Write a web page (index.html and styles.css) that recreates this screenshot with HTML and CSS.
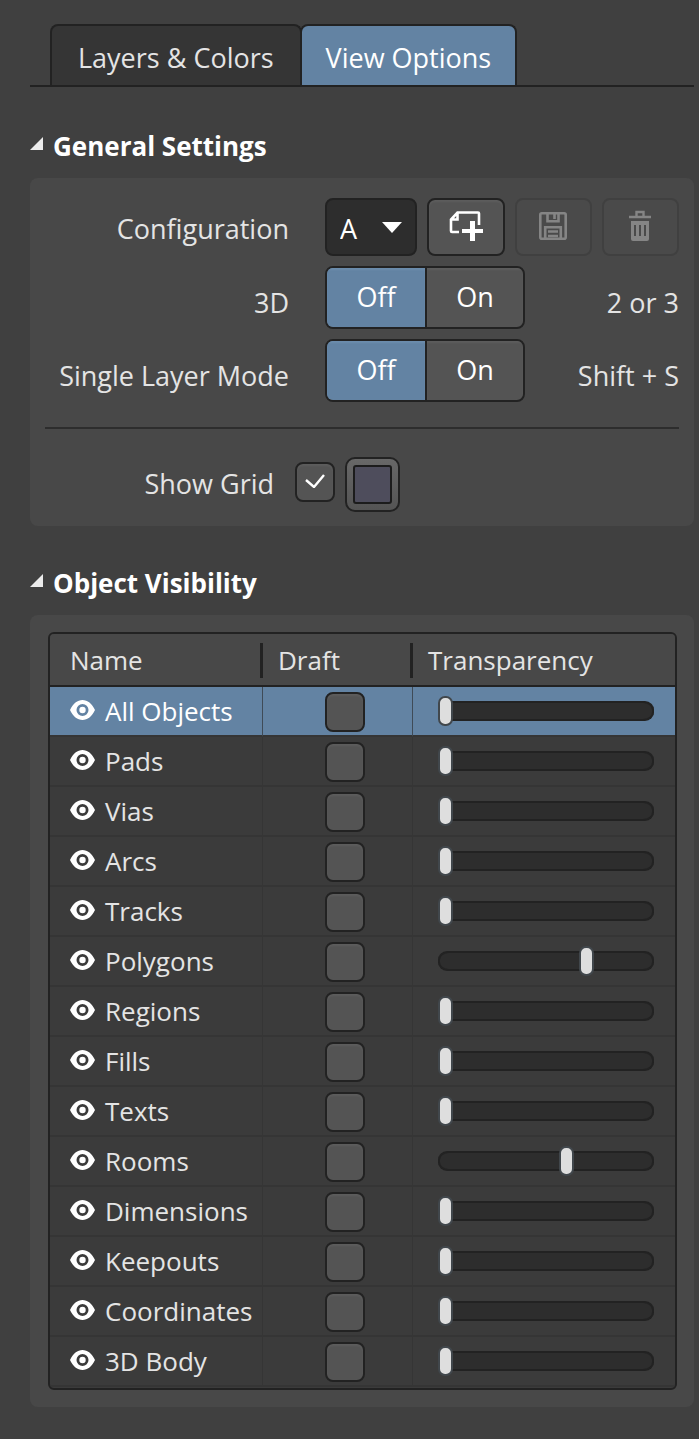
FILE: index.html
```html
<!DOCTYPE html>
<html lang="en">
<head>
<meta charset="utf-8">
<meta name="viewport" content="width=device-width, initial-scale=1">
<title>View Configuration</title>
<link rel="stylesheet" href="styles.css">
</head>
<body>
<svg class="sprite" aria-hidden="true">
  <symbol id="eye" viewBox="0 0 25 20">
    <path fill="currentColor" fill-rule="evenodd" d="M0 10C3 3.500 7.500 0 12.500 0S22 3.500 25 10C22 16.500 17.500 20 12.500 20S3 16.500 0 10ZM12.500 4a6 6 0 1 0 0 12a6 6 0 1 0 0-12Z"/>
    <circle fill="currentColor" cx="12.500" cy="10" r="3.200"/>
  </symbol>
</svg>
<main class="page">
  <div class="tabs" role="tablist">
    <button class="tab" role="tab" aria-selected="false">Layers &amp; Colors</button>
    <button class="tab tab-active" role="tab" aria-selected="true">View Options</button>
  </div>

  <section class="section">
    <h2 class="heading"><button class="heading-button" aria-expanded="true"><svg class="caret" viewBox="0 0 13 13" aria-hidden="true"><path fill="#ececec" d="M13 0v13H0z"/></svg>General Settings</button></h2>
    <div class="panel settings">
      <div class="row">
        <label class="label label-config" for="config">Configuration</label>
        <div class="tools">
          <div class="select-wrap">
            <select class="select" id="config"><option>A</option></select>
            <svg class="select-arrow" viewBox="0 0 20 11" aria-hidden="true"><path fill="#fff" d="M0 0h20L10 11z"/></svg>
          </div>
          <button class="tool" aria-label="New configuration">
            <svg width="34" height="30" viewBox="0 0 34 30" aria-hidden="true"><path fill="none" stroke="#fff" stroke-width="2.600" d="M10 21H3q-1 0-1-1V8.500L8.500 1.500H29q1 0 1 1V14M2 8.500H8.500V1.500"/><path fill="#fff" d="M21 10h5v8h8v4h-8v8h-5v-8h-8v-4h8z"/></svg>
          </button>
          <button class="tool" disabled aria-label="Save configuration">
            <svg width="28" height="28" viewBox="0 0 28 28" aria-hidden="true"><g fill="none" stroke="#858585" stroke-width="2.600"><rect x="1.300" y="1.300" width="25.400" height="25.400" rx="1.500"/><path d="M8.500 1v8.300h11V1M15.500 2v5M6.200 27V15.200h15.600V27M9 19.500h10M9 24h10"/></g></svg>
          </button>
          <button class="tool" disabled aria-label="Delete configuration">
            <svg width="24" height="32" viewBox="0 0 24 32" aria-hidden="true"><path fill="none" stroke="#858585" stroke-width="2.400" d="M8.500 6V2h7v4M1 7h22"/><path fill="#858585" fill-rule="evenodd" d="M3 11h18v18q0 2-2 2H5q-2 0-2-2zM6 15v11h2V15zM11 15v11h2V15zM16 15v11h2V15z"/></svg>
          </button>
        </div>
      </div>
      <div class="row" role="group" aria-labelledby="mode-3d">
        <span class="label" id="mode-3d">3D</span>
        <div class="toggle"><button class="choice choice-on" aria-pressed="true">Off</button><button class="choice" aria-pressed="false">On</button></div>
        <span class="shortcut">2 or 3</span>
      </div>
      <div class="row" role="group" aria-labelledby="mode-single">
        <span class="label" id="mode-single">Single Layer Mode</span>
        <div class="toggle"><button class="choice choice-on" aria-pressed="true">Off</button><button class="choice" aria-pressed="false">On</button></div>
        <span class="shortcut">Shift + S</span>
      </div>
      <hr class="divider">
      <div class="grid-row">
        <label class="grid-label" for="show-grid">Show Grid</label>
        <span class="check-wrap">
          <input class="check" type="checkbox" id="show-grid" checked>
          <svg class="check-mark" viewBox="0 0 20 14" aria-hidden="true"><path fill="none" stroke="#fff" stroke-width="2.400" d="M1 6l8 7L19 1"/></svg>
        </span>
        <button class="swatch" aria-label="Grid color"><span class="swatch-color"></span></button>
      </div>
    </div>
  </section>

  <section class="section">
    <h2 class="heading"><button class="heading-button" aria-expanded="true"><svg class="caret" viewBox="0 0 13 13" aria-hidden="true"><path fill="#ececec" d="M13 0v13H0z"/></svg>Object Visibility</button></h2>
    <div class="panel visibility">
      <div class="frame">
        <table class="objects">
          <colgroup><col class="col-name"><col class="col-draft"><col></colgroup>
          <thead><tr><th scope="col">Name</th><th scope="col">Draft</th><th scope="col">Transparency</th></tr></thead>
          <tbody>
            <tr class="selected"><td><div class="name"><button class="eye" aria-label="Toggle All Objects"><svg><use href="#eye"/></svg></button>All Objects</div></td><td><input class="check" type="checkbox" aria-label="All Objects draft"></td><td><input class="slider" type="range" value="0" aria-label="All Objects transparency"></td></tr>
            <tr><td><div class="name"><button class="eye" aria-label="Toggle Pads"><svg><use href="#eye"/></svg></button>Pads</div></td><td><input class="check" type="checkbox" aria-label="Pads draft"></td><td><input class="slider" type="range" value="0" aria-label="Pads transparency"></td></tr>
            <tr><td><div class="name"><button class="eye" aria-label="Toggle Vias"><svg><use href="#eye"/></svg></button>Vias</div></td><td><input class="check" type="checkbox" aria-label="Vias draft"></td><td><input class="slider" type="range" value="0" aria-label="Vias transparency"></td></tr>
            <tr><td><div class="name"><button class="eye" aria-label="Toggle Arcs"><svg><use href="#eye"/></svg></button>Arcs</div></td><td><input class="check" type="checkbox" aria-label="Arcs draft"></td><td><input class="slider" type="range" value="0" aria-label="Arcs transparency"></td></tr>
            <tr><td><div class="name"><button class="eye" aria-label="Toggle Tracks"><svg><use href="#eye"/></svg></button>Tracks</div></td><td><input class="check" type="checkbox" aria-label="Tracks draft"></td><td><input class="slider" type="range" value="0" aria-label="Tracks transparency"></td></tr>
            <tr><td><div class="name"><button class="eye" aria-label="Toggle Polygons"><svg><use href="#eye"/></svg></button>Polygons</div></td><td><input class="check" type="checkbox" aria-label="Polygons draft"></td><td><input class="slider" type="range" value="70" aria-label="Polygons transparency"></td></tr>
            <tr><td><div class="name"><button class="eye" aria-label="Toggle Regions"><svg><use href="#eye"/></svg></button>Regions</div></td><td><input class="check" type="checkbox" aria-label="Regions draft"></td><td><input class="slider" type="range" value="0" aria-label="Regions transparency"></td></tr>
            <tr><td><div class="name"><button class="eye" aria-label="Toggle Fills"><svg><use href="#eye"/></svg></button>Fills</div></td><td><input class="check" type="checkbox" aria-label="Fills draft"></td><td><input class="slider" type="range" value="0" aria-label="Fills transparency"></td></tr>
            <tr><td><div class="name"><button class="eye" aria-label="Toggle Texts"><svg><use href="#eye"/></svg></button>Texts</div></td><td><input class="check" type="checkbox" aria-label="Texts draft"></td><td><input class="slider" type="range" value="0" aria-label="Texts transparency"></td></tr>
            <tr><td><div class="name"><button class="eye" aria-label="Toggle Rooms"><svg><use href="#eye"/></svg></button>Rooms</div></td><td><input class="check" type="checkbox" aria-label="Rooms draft"></td><td><input class="slider" type="range" value="60" aria-label="Rooms transparency"></td></tr>
            <tr><td><div class="name"><button class="eye" aria-label="Toggle Dimensions"><svg><use href="#eye"/></svg></button>Dimensions</div></td><td><input class="check" type="checkbox" aria-label="Dimensions draft"></td><td><input class="slider" type="range" value="0" aria-label="Dimensions transparency"></td></tr>
            <tr><td><div class="name"><button class="eye" aria-label="Toggle Keepouts"><svg><use href="#eye"/></svg></button>Keepouts</div></td><td><input class="check" type="checkbox" aria-label="Keepouts draft"></td><td><input class="slider" type="range" value="0" aria-label="Keepouts transparency"></td></tr>
            <tr><td><div class="name"><button class="eye" aria-label="Toggle Coordinates"><svg><use href="#eye"/></svg></button>Coordinates</div></td><td><input class="check" type="checkbox" aria-label="Coordinates draft"></td><td><input class="slider" type="range" value="0" aria-label="Coordinates transparency"></td></tr>
            <tr><td><div class="name"><button class="eye" aria-label="Toggle 3D Body"><svg><use href="#eye"/></svg></button>3D Body</div></td><td><input class="check" type="checkbox" aria-label="3D Body draft"></td><td><input class="slider" type="range" value="0" aria-label="3D Body transparency"></td></tr>
          </tbody>
        </table>
      </div>
    </div>
  </section>
</main>
</body>
</html>
```

FILE: styles.css
```css
* { box-sizing: border-box; }

body {
  margin: 0;
  background: #404040;
  color: #e4e4e4;
  font: 26px/36px "Open Sans", "Noto Sans", sans-serif;
}

button, select, input {
  margin: 0;
  padding: 0;
  font: inherit;
  color: inherit;
}

button { background: none; border: 0; }
svg { display: block; }
.sprite { display: none; }
.page { padding: 24px 5px 32px 30px; }

/* Tabs */
.tabs {
  display: flex;
  padding-left: 20px;
  border-bottom: 2px solid #222;
  font-size: 27px;
}
.tab {
  height: 61px;
  padding: 4px 26px 0;
  background: #353535;
  border: 2px solid #222;
  border-bottom: 0;
  border-radius: 8px 8px 0 0;
}
.tab-active {
  padding: 4px 24px 0;
  margin-left: -2px;
  background: #6383a3;
  color: #fff;
}

/* Sections */
.section { padding-top: 41px; }
.section + .section { padding-top: 39px; }
.heading { margin: 0 0 14px; font-size: 26px; line-height: 36px; }
.heading-button {
  display: flex;
  align-items: center;
  gap: 10px;
  color: #fff;
  font-weight: bold;
}
.caret { width: 13px; height: 13px; margin-bottom: 5px; }
.panel { background: #484848; border-radius: 8px; }
.settings { padding: 20px 15px 14px; font-size: 27px; }

.row {
  display: grid;
  grid-template-columns: 244px auto 1fr;
  column-gap: 36px;
  align-items: center;
  margin-bottom: 10px;
}
.label { padding-top: 10px; text-align: right; white-space: nowrap; }
.label-config { padding-top: 4px; }
.shortcut { padding-top: 10px; text-align: right; }

.tools {
  display: flex;
  gap: 10px;
  grid-column: 2 / 4;
}
.tools > * { flex: 1 1 77px; height: 58px; }
.tools > .select-wrap { flex-basis: 92px; position: relative; }
.select {
  width: 100%;
  height: 100%;
  padding: 4px 13px 0;
  appearance: none;
  background: #2d2d2d;
  border: 2px solid #222;
  border-radius: 8px;
  color: #fff;
}
.select-arrow {
  position: absolute;
  top: 24px;
  right: 15px;
  width: 20px;
  height: 11px;
  pointer-events: none;
}
.tool {
  display: flex;
  align-items: center;
  justify-content: center;
  background: #545454;
  border: 2px solid #222;
  border-radius: 8px;
  box-shadow: inset 0 2px 2px #5d5d5d;
}
.tool:disabled {
  background: #4a4a4a;
  border-color: #404040;
  box-shadow: none;
}
.tool svg { margin-bottom: 3px; }

.toggle {
  display: flex;
  width: 200px;
  height: 63px;
  overflow: hidden;
  background: #545454;
  border: 2px solid #222;
  border-radius: 8px;
}
.choice {
  flex: 1;
  padding-bottom: 2px;
  color: #fff;
  box-shadow: inset 0 2px 2px #5d5d5d;
}
.choice-on {
  flex: none;
  width: 100px;
  background: #6383a3;
  border-right: 2px solid #222;
  box-shadow: inset 0 2px 2px #6c8dad;
}

.divider {
  height: 2px;
  margin: 25px 0 28px;
  background: #2d2d2d;
  border: 0;
}
.grid-row { display: flex; align-items: center; gap: 10px; }
.grid-label { width: 229px; margin-right: 11px; padding-bottom: 2px; text-align: right; }

.check {
  display: block;
  width: 40px;
  height: 40px;
  appearance: none;
  background: #545454;
  border: 2px solid #222;
  border-radius: 8px;
  box-shadow: inset 0 2px 2px #5d5d5d;
}
.check-wrap { position: relative; margin-bottom: 5px; }
.check-mark {
  position: absolute;
  top: 12px;
  left: 10px;
  width: 20px;
  height: 14px;
  pointer-events: none;
}
.swatch {
  width: 55px;
  height: 55px;
  padding: 6px;
  background: linear-gradient(#686868, #545454);
  border: 2px solid #222;
  border-radius: 10px;
}
.swatch-color {
  display: block;
  height: 100%;
  background: #4e4d5c;
  border: 2px solid #1c1c1c;
  border-radius: 3px;
}

/* Object table */
.visibility { padding: 17px; padding-left: 18px; }
.frame {
  overflow: hidden;
  padding-bottom: 1px;
  background: #3b3b3b;
  border: 2px solid #222;
  border-radius: 6px;
}
.objects {
  width: 100%;
  table-layout: fixed;
  border-spacing: 0;
}
.col-name { width: 213px; }
.col-draft { width: 150px; }
.objects th {
  height: 53px;
  padding: 0 0 0 15px;
  background: linear-gradient(#222, #222) right 9px / 3px 35px no-repeat #484848;
  border-bottom: 2px solid #222;
  font-weight: normal;
  text-align: left;
}
.objects th:first-child { padding-left: 20px; }
.objects th:last-child { background: #484848; }
.objects td {
  height: 50px;
  padding: 0;
  border-right: 1px solid #353535;
  border-bottom: 2px solid #353535;
}
.objects td:nth-child(2) { padding-left: 14px; }
.objects td:last-child { padding: 0 21px 0 25px; border-right: 0; }
.objects td .check { margin: 2px auto 0; }
.selected { background: #6383a3; color: #fff; }
.objects .selected td { border-right-color: #3f4b57; }
.name {
  display: flex;
  align-items: center;
  gap: 10px;
  padding-left: 20px;
}
.eye { width: 25px; height: 20px; margin-bottom: 2px; color: #fff; }
.eye svg { width: 25px; height: 20px; }

.slider {
  display: block;
  width: 100%;
  height: 30px;
  appearance: none;
  background: none;
}
.slider::-webkit-slider-runnable-track {
  height: 20px;
  background: #2d2d2d;
  border: 2px solid #222;
  border-width: 2px 0;
  border-radius: 9px;
  box-shadow: inset 2px 0 #222, inset -2px 0 #222;
}
.slider::-webkit-slider-thumb {
  width: 15px;
  height: 30px;
  margin-top: -7px;
  appearance: none;
  background: #dedede;
  border: 2px solid #41474c;
  border-radius: 7px;
}
```
